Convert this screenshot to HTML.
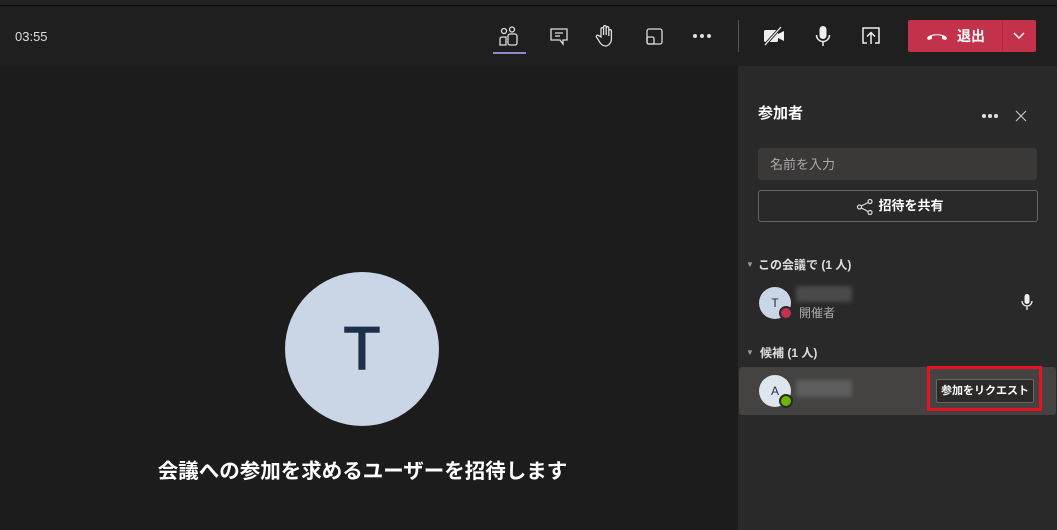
<!DOCTYPE html>
<html><head><meta charset="utf-8"><style>
*{margin:0;padding:0;box-sizing:border-box}
body{width:1057px;height:530px;overflow:hidden;background:#1c1c1c;font-family:"Liberation Sans","Noto Sans CJK JP",sans-serif;color:#fff;position:relative}
.abs{position:absolute}
.top{left:0;top:0;width:1057px;height:66px;background:#1f1f1f;border-top:5px solid #232323}
.topline{left:0;top:5px;width:1057px;height:1px;background:#0a0a0a}
.panel{left:738px;top:66px;width:319px;height:464px;background:#292929}
.dot{position:absolute;width:4px;height:4px;border-radius:50%;background:#ddd}
</style></head><body>
<div class="abs top"></div><div class="abs topline"></div>
<div class="abs" style="left:15px;top:29px;font-size:13px;color:#ddd">03:55</div>
<svg class="abs" style="left:497px;top:25px" width="24" height="24" viewBox="0 0 24 24" fill="none" stroke="#ddd" stroke-width="1.3"><circle cx="7" cy="6" r="2.5"/><circle cx="15" cy="4.5" r="2.5"/><rect x="11" y="9" width="9" height="11" rx="2"/><path d="M3 20v-6a2 2 0 012-2h4v8z"/></svg>
<div class="abs" style="left:493px;top:52px;width:33px;height:2px;background:#8b8cc7"></div>
<svg class="abs" style="left:549px;top:26px" width="20" height="20" viewBox="0 0 20 20" fill="none" stroke="#ddd" stroke-width="1.3"><path d="M2 3h16v11h-4v4l-3-4H2z"/><path d="M6 7h8M6 10h5"/></svg>
<svg class="abs" style="left:595px;top:24px" width="22" height="24" viewBox="0 0 22 24" fill="none" stroke="#ddd" stroke-width="1.3"><path d="M6 13V5a1.3 1.3 0 012.6 0v6V3a1.3 1.3 0 012.6 0v8V4a1.3 1.3 0 012.6 0v8V7a1.3 1.3 0 012.6 0v8c0 4-3 7-6 7s-5-2-7-6l-2-3a1.3 1.3 0 012-1.5z"/></svg>
<svg class="abs" style="left:645px;top:27px" width="20" height="20" viewBox="0 0 20 20" fill="none" stroke="#ddd" stroke-width="1.3"><rect x="2" y="2" width="15" height="15" rx="2"/><rect x="2" y="10" width="7" height="7" rx="1.5"/></svg>
<div class="dot" style="left:693px;top:34px"></div><div class="dot" style="left:700px;top:34px"></div><div class="dot" style="left:707px;top:34px"></div>
<div class="abs" style="left:738px;top:20px;width:1px;height:32px;background:#555"></div>
<svg class="abs" style="left:762px;top:26px" width="24" height="20" viewBox="0 0 24 20"><rect x="2" y="4" width="14" height="12" rx="1.5" fill="#eee"/><path d="M16 8l6-3v10l-6-3z" fill="#eee"/><path d="M3 19L19 1" stroke="#1f1f1f" stroke-width="3"/><path d="M3 19L19 1" stroke="#eee" stroke-width="1.3"/></svg>
<svg class="abs" style="left:813px;top:24px" width="20" height="24" viewBox="0 0 20 24"><rect x="6.5" y="2" width="7" height="13" rx="3.5" fill="#eee"/><path d="M3.5 11a6.5 6.5 0 0013 0M10 17.5V22" stroke="#eee" stroke-width="1.5" fill="none"/></svg>
<svg class="abs" style="left:860px;top:25px" width="22" height="22" viewBox="0 0 22 22" fill="none" stroke="#eee" stroke-width="1.5"><path d="M7 18H3V3h16v15h-4"/><path d="M11 19V8M7 11.5l4-4 4 4"/></svg>
<div class="abs" style="left:908px;top:20px;width:128px;height:32px;background:#c4314b;border-radius:2px"></div>
<div class="abs" style="left:1002px;top:20px;width:1px;height:32px;background:#a82840"></div>
<svg class="abs" style="left:926px;top:31px" width="22" height="10" viewBox="0 0 22 10"><path d="M1 7c2-5 18-5 20 0l-1 2-4-1V5c-3-1-7-1-10 0v3l-4 1z" fill="#fff"/></svg>
<div class="abs" style="left:957px;top:26px;font-size:14px;font-weight:bold">退出</div>
<svg class="abs" style="left:1012px;top:31px" width="14" height="10" viewBox="0 0 14 10"><path d="M2 2l5 5 5-5" stroke="#fff" stroke-width="1.4" fill="none"/></svg>

<div class="abs" style="left:285px;top:272px;width:154px;height:154px;border-radius:50%;background:#cad6e5;color:#1c2e4a;font-size:60px;text-align:center;line-height:154px;-webkit-text-stroke:1.5px #1c2e4a">T</div>
<div class="abs" style="left:0;top:454px;width:725px;text-align:center;font-size:20.5px;font-weight:bold">会議への参加を求めるユーザーを招待します</div>

<div class="abs panel"></div>
<div class="abs" style="left:758px;top:102px;font-size:15px;font-weight:bold">参加者</div>
<div class="dot" style="left:982px;top:114px;width:3.5px;height:3.5px"></div><div class="dot" style="left:988px;top:114px;width:3.5px;height:3.5px"></div><div class="dot" style="left:994px;top:114px;width:3.5px;height:3.5px"></div>
<svg class="abs" style="left:1015px;top:110px" width="12" height="12" viewBox="0 0 12 12"><path d="M1 1l10 10M11 1L1 11" stroke="#ccc" stroke-width="1.1"/></svg>
<div class="abs" style="left:758px;top:148px;width:279px;height:32px;background:#3a3938;border-radius:3px;font-size:13px;color:#aaa;padding:6px 12px">名前を入力</div>
<div class="abs" style="left:758px;top:190px;width:280px;height:32px;border:1px solid #666;border-radius:3px;font-size:13px;font-weight:bold;text-align:center;line-height:30px;padding-left:26px">招待を共有</div>
<svg class="abs" style="left:856px;top:198px" width="18" height="18" viewBox="0 0 18 18" fill="none" stroke="#ddd" stroke-width="1.2"><circle cx="3.5" cy="9" r="2"/><circle cx="14" cy="3.5" r="2"/><circle cx="14" cy="14.5" r="2"/><path d="M5.3 8l6.9-3.5M5.3 10l6.9 3.5"/></svg>
<div class="abs" style="left:746px;top:260px;font-size:8px;color:#999">▼</div>
<div class="abs" style="left:758px;top:256px;font-size:12px;font-weight:bold;color:#ddd">この会議で (1 人)</div>
<div class="abs" style="left:759px;top:287px;width:32px;height:32px;border-radius:50%;background:#cad6e5;color:#1c2e4a;font-size:12px;text-align:center;line-height:32px">T</div>
<div class="abs" style="left:779px;top:306px;width:14px;height:14px;border-radius:50%;background:#c4314b;border:2px solid #292929"></div>
<div class="abs" style="left:796px;top:286px;width:56px;height:16px;background:#4a4a4a;filter:blur(2px)"></div>
<div class="abs" style="left:799px;top:304px;font-size:12px;color:#aaa">開催者</div>
<svg class="abs" style="left:1020px;top:293px" width="14" height="18" viewBox="0 0 14 18"><rect x="4.5" y="1" width="5" height="10" rx="2.5" fill="#eee"/><path d="M2 8a5 5 0 0010 0M7 13v4" stroke="#eee" stroke-width="1.3" fill="none"/></svg>
<div class="abs" style="left:746px;top:348px;font-size:8px;color:#999">▼</div>
<div class="abs" style="left:760px;top:344px;font-size:12px;font-weight:bold;color:#ddd">候補 (1 人)</div>
<div class="abs" style="left:739px;top:367px;width:317px;height:48px;background:#444342;border-radius:3px"></div>
<div class="abs" style="left:759px;top:375px;width:32px;height:32px;border-radius:50%;background:#dde6ec;color:#1c2e4a;font-size:12px;text-align:center;line-height:32px">A</div>
<div class="abs" style="left:779px;top:394px;width:14px;height:14px;border-radius:50%;background:#6bb700;border:2px solid #292929"></div>
<div class="abs" style="left:796px;top:380px;width:56px;height:17px;background:#5e5e5e;filter:blur(2px)"></div>
<div class="abs" style="left:927px;top:366px;width:115px;height:45px;border:3px solid #e81123"></div>
<div class="abs" style="left:936px;top:379px;width:98px;height:24px;background:#2b2a29;border:1px solid #666;border-radius:2px;font-size:11px;font-weight:bold;text-align:center;line-height:22px">参加をリクエスト</div>
</body></html>
